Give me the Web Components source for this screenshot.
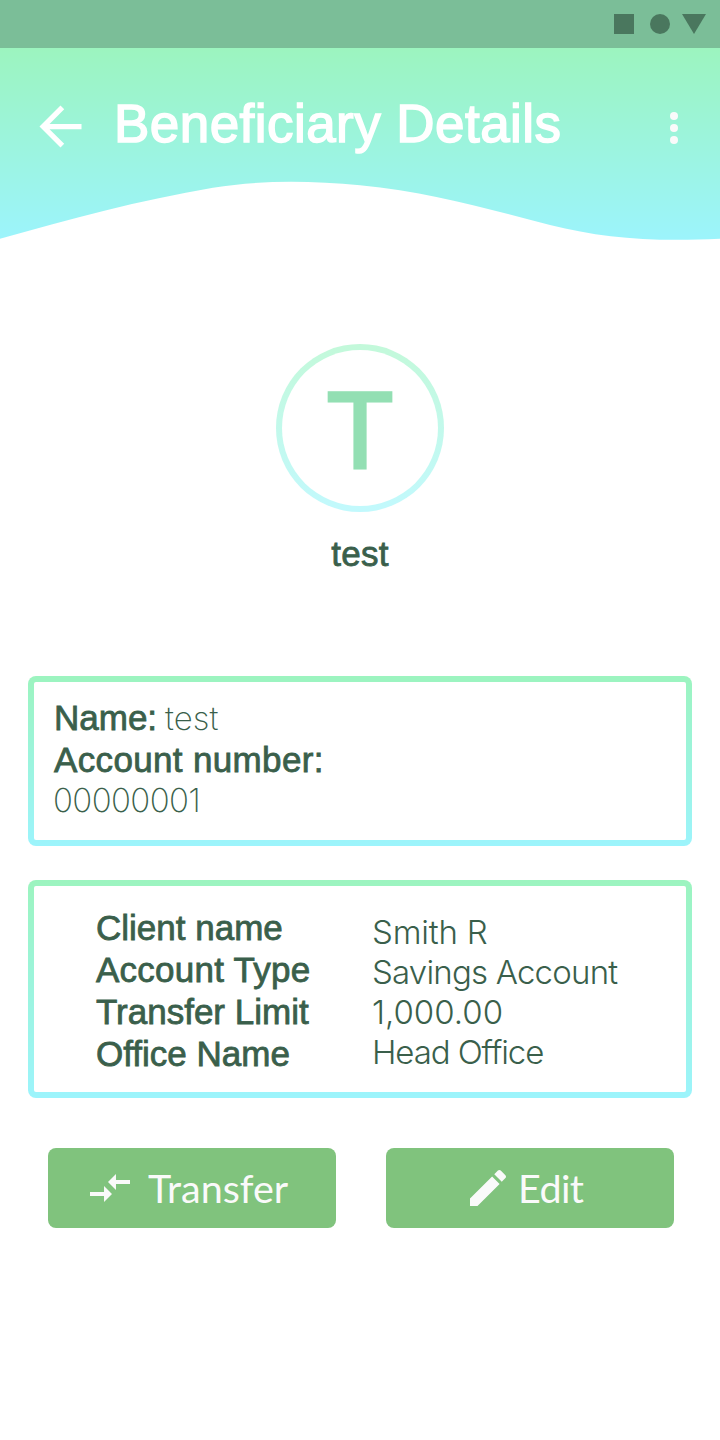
<!DOCTYPE html>
<html lang="en">
<head>
<meta charset="utf-8">
<title>Beneficiary Details</title>
<style>
html,body{margin:0;background:#fff}
body{width:720px;height:1440px;overflow:hidden;font-family:"Liberation Sans",Arial,sans-serif;color:#3a5f4b}
</style>
</head>
<body>
<beneficiary-page></beneficiary-page>
<script>
const define = (name, html) => customElements.define(name, class extends HTMLElement {
  constructor() {
    super();
    const t = document.createElement('template');
    t.innerHTML = html;
    this.attachShadow({mode: 'open'}).append(t.content.cloneNode(true));
  }
});

define('status-bar', `
<style>:host{display:flex;justify-content:flex-end;height:48px;background:#7bbe98}svg{display:block}</style>
<svg width="120" height="48" fill="#4a775e"><path d="M14 14h20v20H14z"/><circle cx="60" cy="24" r="10"/><path d="M82 14h24l-12 20z"/></svg>`);

define('wave-header', `
<style>
:host{display:grid;height:192px}
svg{display:block}
.wave,.bar{grid-area:1/1}
.bar{display:flex;align-items:flex-start;color:#fff}
.back{margin:47px 0 0 29px}
h1{margin:46px 0 0 22px;flex:1;font-size:53px;line-height:60px;font-weight:400;letter-spacing:.45px;white-space:nowrap;-webkit-text-stroke:1.5px #fff}
.more{margin:64px 42px 0 0}
</style>
<svg class="wave" width="720" height="192" viewBox="0 48 720 192">
<defs><linearGradient id="g" x1="0" y1="0" x2="0" y2="1"><stop offset="0" stop-color="#9cf4bf"/><stop offset="1" stop-color="#9cf4fc"/></linearGradient></defs>
<path fill="url(#g)" d="M0 48H720V238.8C650 242 602 238 550 225C488 209 430 192 360 185.3C310 180.5 260 180 213 187.7C140 200 70 219 0 238.7Z"/></svg>
<div class="bar">
<svg class="back" width="63" height="63" viewBox="0 0 24 24" fill="#fff"><path d="M20 11H7.83l5.59-5.59L12 4l-8 8 8 8 1.41-1.41L7.83 13H20z"/></svg>
<h1><slot></slot></h1>
<svg class="more" width="8" height="32" fill="#fafafa"><circle cx="4" cy="4" r="4"/><circle cx="4" cy="16" r="4"/><circle cx="4" cy="28" r="4"/></svg>
</div>`);

define('profile-avatar', `
<style>
:host{display:flex;flex-direction:column;align-items:center;padding-top:104px;height:332px}
.ring{width:156px;height:156px;border:6px solid transparent;border-radius:50%;background:linear-gradient(#fff,#fff) padding-box,linear-gradient(#c3f9da,#c2f9fd) border-box;text-align:center;font-size:109px;line-height:156px;color:#93dfb3;-webkit-text-stroke:3px #93dfb3}
.ring span{display:block;margin-top:2px}
.name{margin-top:21px;font-size:35px;line-height:42px;letter-spacing:.3px;-webkit-text-stroke:.8px}
</style>
<div class="ring"><span><slot name="initial"></slot></span></div><div class="name"><slot></slot></div>`);

define('outline-card', `
<style>:host{display:block;box-sizing:border-box;margin:0 28px;border:6px solid transparent;border-radius:8px;background:linear-gradient(#fff,#fff) padding-box,linear-gradient(#9cf4bf,#9cf4fc) border-box}</style><slot></slot>`);

define('strong-text', `
<style>:host{display:block;font-size:35px;line-height:42px;white-space:nowrap;-webkit-text-stroke:.8px}</style><slot></slot>`);

define('light-text', `
<style>:host{display:block;font:300 33px/40px Inter,sans-serif;white-space:nowrap}:host([thin]){font-weight:200}</style><slot></slot>`);

define('action-button', `
<style>
:host{display:flex;box-sizing:border-box;align-items:center;width:288px;height:80px;border-radius:8px;background:#80c37d;color:#fafafa;font:400 39.5px/48px Lato,sans-serif;white-space:nowrap}
slot{display:block}
</style>
<slot name="icon"></slot><slot></slot>`);

define('beneficiary-page', `
<style>
:host{display:block;width:720px;height:1440px;background:#fff}
svg{display:block;fill:#fafafa}
.summary{height:170px;padding:15px 20px 0}
.row{display:flex;height:42px}
.details{height:218px;margin-top:34px;display:grid;grid-template-columns:276px 1fr;padding:21px 0 0 62px}
.values{padding-top:5px}
.actions{display:flex;gap:50px;margin:50px 0 0 48px}
</style>
<status-bar></status-bar>
<wave-header>Beneficiary Details</wave-header>
<profile-avatar><span slot="initial">T</span>test</profile-avatar>
<outline-card class="summary">
<div class="row"><strong-text>Name:</strong-text><light-text thin style="margin:1px 0 0 8px">test</light-text></div>
<strong-text style="letter-spacing:.35px">Account number:</strong-text>
<light-text thin style="line-height:38px;letter-spacing:-.6px;margin-left:-1px">00000001</light-text>
</outline-card>
<outline-card class="details">
<div><strong-text>Client name</strong-text><strong-text style="letter-spacing:.25px">Account Type</strong-text><strong-text>Transfer Limit</strong-text><strong-text>Office Name</strong-text></div>
<div class="values"><light-text style="letter-spacing:-.2px">Smith R</light-text><light-text style="letter-spacing:-.8px">Savings Account</light-text><light-text>1,000.00</light-text><light-text style="letter-spacing:-1.1px">Head Office</light-text></div>
</outline-card>
<div class="actions">
<action-button style="padding-left:38px"><svg slot="icon" width="48" height="48" viewBox="0 0 24 24" style="margin-right:14px"><path d="M9.01 14H2v2h7.01v3L13 15l-3.99-4v3zm5.98-1v-3H22V8h-7.01V5L11 9l3.99 4z"/></svg>Transfer</action-button>
<action-button style="padding-left:78px;letter-spacing:-.6px"><svg slot="icon" width="48" height="48" viewBox="0 0 24 24" style="margin-right:6px"><path d="M3 17.25V21h3.75L17.81 9.94l-3.75-3.75L3 17.25zM20.71 7.04c.39-.39.39-1.02 0-1.41l-2.34-2.34c-.39-.39-1.02-.39-1.41 0l-1.83 1.83 3.75 3.75 1.83-1.83z"/></svg>Edit</action-button>
</div>`);
</script>
</body>
</html>
